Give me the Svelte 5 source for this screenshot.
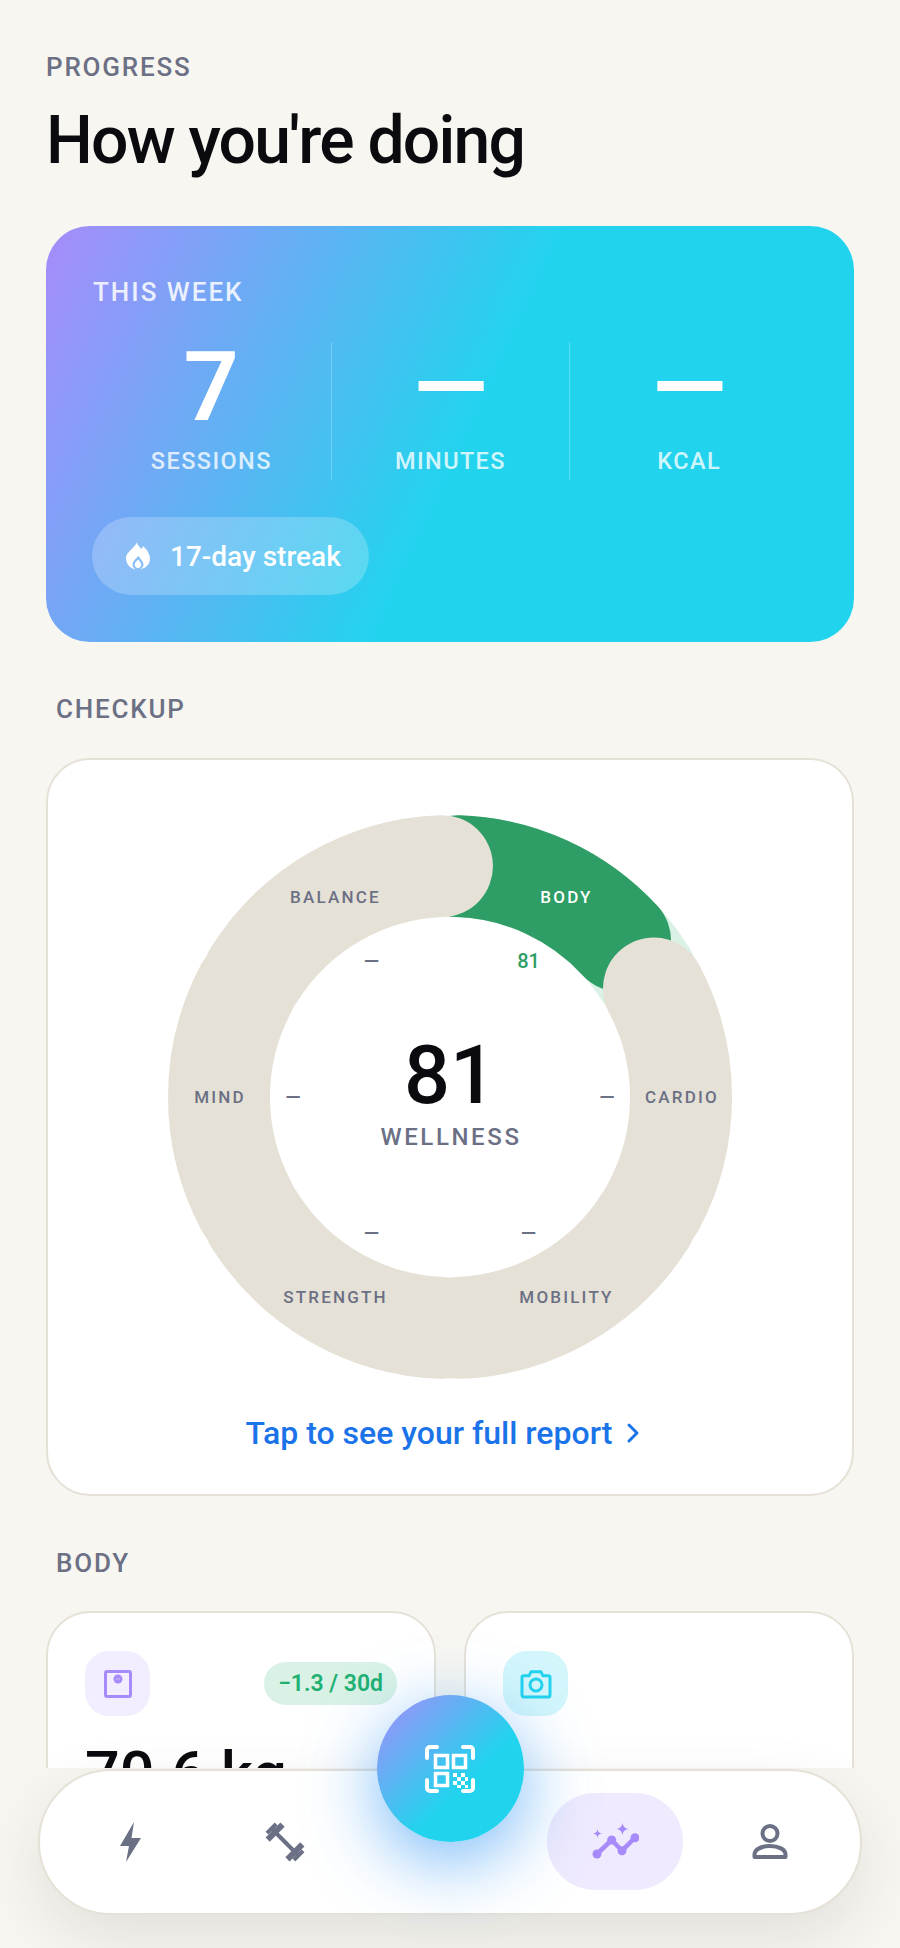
<script>
  const R = 231, C = 282;
  const pt = (a, r = R) => {
    const t = (a * Math.PI) / 180;
    return [C + r * Math.sin(t), C - r * Math.cos(t)];
  };
  const arc = (a, b) => {
    const [x1, y1] = pt(a), [x2, y2] = pt(b);
    return `M${x1.toFixed(2)} ${y1.toFixed(2)}A${R} ${R} 0 0 1 ${x2.toFixed(2)} ${y2.toFixed(2)}`;
  };
  const segs = [
    { name: 'BODY', mid: 30, value: '81', score: 81 },
    { name: 'CARDIO', mid: 90, value: '—' },
    { name: 'MOBILITY', mid: 150, value: '—' },
    { name: 'STRENGTH', mid: 210, value: '—' },
    { name: 'MIND', mid: 270, value: '—' },
    { name: 'BALANCE', mid: 330, value: '—' }
  ];
  const stats = [
    { v: '7', l: 'SESSIONS' },
    { v: '—', l: 'MINUTES' },
    { v: '—', l: 'KCAL' }
  ];
</script>

<div class="app">
  <main class="scroll">
    <p class="eyebrow">PROGRESS</p>
    <h1>How you're doing</h1>

    <section class="hero">
      <p class="hero-label">THIS WEEK</p>
      <div class="stats">
        {#each stats as s}
          <div class="stat">
            <span class="stat-v">{s.v}</span>
            <span class="stat-l">{s.l}</span>
          </div>
        {/each}
      </div>
      <div class="pill">
        <svg class="flame" viewBox="0 0 26 28" width="26" height="28">
          <path fill="#fff" fill-rule="evenodd" d="M12 0.5c1 3.5 3 5 4.500 6.500 .8-1 1.200-2 1.400-3 3.600 3 7.100 7.600 7.100 12.600C25 23 19.600 27.500 13 27.500S1 23 1 16c0-6 7.500-9 11-15.500zM13.200 14c-2.600 2.800-5.700 5.800-5.700 8.400 0 2.900 2.400 5 5.500 5s5.500-2.100 5.500-5c0-2.700-3-5.600-5.300-8.400z"/>
          <path fill="#fff" d="M13.100 17.500c-1.800 2-3.400 3.600-3.400 5.300 0 1.800 1.500 3.200 3.300 3.200s3.300-1.400 3.300-3.200c0-1.700-1.700-3.400-3.200-5.300z"/>
        </svg>
        <span>17-day streak</span>
      </div>
    </section>

    <h2>CHECKUP</h2>
    <section class="card checkup">
      <svg class="ring" viewBox="0 0 564 564" width="564" height="564">
        <g fill="none" stroke-width="102" stroke-linecap="round">
          <path d={arc(2, 58)} stroke="#d9f2e5" />
          <path d={arc(2, 47.4)} stroke="#2f9e66" />
          {#each segs.slice(1) as s}
            <path d={arc(s.mid - 28, s.mid + 28)} stroke="#e5e1d6" />
          {/each}
        </g>
        {#each segs as s}
          <text class="seg-name" class:on={s.score} x={pt(s.mid)[0] + 1} y={pt(s.mid)[1]}>{s.name}</text>
          <text class="seg-val" class:on={s.score} x={pt(s.mid, 157)[0]} y={pt(s.mid, 157)[1]}>{s.value}</text>
        {/each}
        <text class="total" x="282" y="260">81</text>
        <text class="total-l" x="283" y="322">WELLNESS</text>
      </svg>
      <div class="report">
        <span>Tap to see your full report</span>
        <svg viewBox="0 0 14 22" width="14" height="22"><path d="M3 3l8 8-8 8" fill="none" stroke="#1a73e8" stroke-width="3" stroke-linecap="round" stroke-linejoin="round"/></svg>
      </div>
    </section>

    <h2>BODY</h2>
    <div class="cols">
      <section class="card mini">
        <div class="mini-top">
          <div class="tile purple">
            <svg viewBox="0 0 28 28" width="28" height="28">
              <rect x="1.500" y="1.500" width="25" height="25" rx="1.500" fill="none" stroke="#a78bfa" stroke-width="3"/>
              <circle cx="14" cy="9" r="4.500" fill="#a78bfa"/>
              <path d="M12 9h.6M13.700 9h.6M15.400 9h.6" stroke="#fff" stroke-width="1.200"/>
            </svg>
          </div>
          <span class="badge">−1.3 / 30d</span>
        </div>
        <div class="mini-val">70.6 kg</div>
      </section>
      <section class="card mini">
        <div class="mini-top">
          <div class="tile cyan">
            <svg viewBox="0 0 32 30" width="32" height="30">
              <path d="M2 8.500c0-1 .7-1.700 1.700-1.700H9l2-4h10l2 4h5.300c1 0 1.700.7 1.700 1.700v17.800c0 1-.7 1.700-1.700 1.700H3.700c-1 0-1.700-.7-1.700-1.700z" fill="none" stroke="#22d3ee" stroke-width="3" stroke-linejoin="round"/>
              <circle cx="16" cy="16" r="6" fill="none" stroke="#22d3ee" stroke-width="3"/>
            </svg>
          </div>
        </div>
      </section>
    </div>
  </main>

  <nav class="nav">
    <div class="item">
      <svg viewBox="0 0 24 42" width="24" height="42"><path d="M16 1L2 25h9L8 41 23 17h-9.500z" fill="#6b7085"/></svg>
    </div>
    <div class="item">
      <svg viewBox="0 0 44 44" width="44" height="44">
        <g transform="rotate(45 22 22)" fill="#6b7085">
          <rect x="4" y="20" width="36" height="4"/>
          <rect x="1" y="15.500" width="4" height="13"/>
          <rect x="5" y="11.500" width="6" height="21"/>
          <rect x="33" y="11.500" width="6" height="21"/>
          <rect x="39" y="15.500" width="4" height="13"/>
        </g>
      </svg>
    </div>
    <div class="slot"></div>
    <div class="item active">
      <svg viewBox="0 -3 48 44" width="48" height="44">
        <path d="M6 31L20.700 17 31 27.700 44 14.700" fill="none" stroke="#a78bfa" stroke-width="4.500" stroke-linejoin="round"/>
        <circle cx="6" cy="31" r="4.500" fill="#a78bfa"/>
        <circle cx="20.700" cy="17" r="4.500" fill="#a78bfa"/>
        <circle cx="31" cy="27.700" r="4.500" fill="#a78bfa"/>
        <circle cx="44" cy="14.700" r="4.500" fill="#a78bfa"/>
        <path d="M31.500 0c.8 3.800 2.200 5.200 6 6-3.800.8-5.200 2.200-6 6-.8-3.800-2.200-5.200-6-6 3.800-.8 5.200-2.200 6-6z" fill="#a78bfa"/>
        <path d="M6.500 6c.3 2.900 1.600 4.200 4.500 4.500-2.900.3-4.200 1.600-4.500 4.500-.3-2.900-1.600-4.200-4.500-4.500 2.900-.3 4.200-1.600 4.500-4.500z" fill="#a78bfa"/>
      </svg>
    </div>
    <div class="item">
      <svg viewBox="0 0 36 36" width="36" height="36">
        <circle cx="18" cy="9.500" r="7.500" fill="none" stroke="#6b7085" stroke-width="4"/>
        <path d="M2.500 33v-2.500c0-5 7-8.500 15.500-8.500s15.500 3.500 15.500 8.500V33z" fill="none" stroke="#6b7085" stroke-width="4" stroke-linejoin="round"/>
      </svg>
    </div>
  </nav>

  <button class="fab" aria-label="Scan">
    <svg viewBox="0 0 50 48" width="50" height="48" fill="none" stroke="#fff">
      <g stroke-width="4" stroke-linecap="round" stroke-linejoin="round">
        <path d="M2 13V5c0-1.700 1.300-3 3-3h7"/>
        <path d="M38 2h7c1.700 0 3 1.300 3 3v8"/>
        <path d="M2 35v8c0 1.700 1.300 3 3 3h7"/>
        <path d="M38 46h7c1.700 0 3-1.300 3-3v-8"/>
      </g>
      <g stroke-width="3.500">
        <rect x="10.500" y="10.500" width="12" height="12"/>
        <rect x="28.500" y="10.500" width="12" height="12"/>
        <rect x="10.500" y="28.500" width="12" height="12"/>
      </g>
      <path d="M28 28h4v4h-4zM36 28h4v4h-4zM32 32h4v4h-4zM40 32h3v4h-3zM28 36h4v4h-4zM36 36h4v4h-4zM32 40h4v3h-4zM40 40h3v3h-3z" fill="#fff" stroke="none"/>
    </svg>
  </button>
</div>

<style>
  :global(body) {
    margin: 0;
    background: #f7f6f1;
  }
  .app {
    position: relative;
    height: 1948px;
    overflow: hidden;
    background: #f7f6f1;
    font-family: Roboto, "Liberation Sans", sans-serif;
    color: #0b0b0f;
  }
  .scroll {
    box-sizing: border-box;
    height: 1768px;
    padding: 52px 46px 0;
    overflow: hidden;
  }
  .eyebrow {
    margin: 0;
    font-size: 26px;
    line-height: 30px;
    font-weight: 500;
    letter-spacing: 1.800px;
    color: #6b7085;
  }
  h1 {
    margin: 23px 0 0;
    font-size: 66px;
    line-height: 72px;
    font-weight: 500;
    letter-spacing: -1.800px;
  }
  .hero {
    box-sizing: border-box;
    height: 416px;
    margin-top: 49px;
    padding: 51px 46px 0;
    border-radius: 44px;
    background: linear-gradient(115deg, #a78bfa 0%, #22d3ee 52%);
    color: #fff;
  }
  .hero-label {
    margin: 0;
    padding-left: 1px;
    font-size: 26px;
    line-height: 30px;
    font-weight: 500;
    letter-spacing: 2px;
    color: rgba(255, 255, 255, 0.85);
  }
  .stats {
    display: grid;
    grid-template-columns: repeat(3, 1fr);
    margin-top: 35px;
    height: 138px;
  }
  .stat {
    display: flex;
    flex-direction: column;
    align-items: center;
    border-left: 1.500px solid rgba(255, 255, 255, 0.25);
  }
  .stat:first-child {
    border-left: 0;
  }
  .stat-v {
    font-size: 97px;
    line-height: 90px;
    font-weight: 600;
  }
  .stat-l {
    margin-top: 14px;
    font-size: 23.500px;
    line-height: 30px;
    font-weight: 500;
    letter-spacing: 1.400px;
    color: rgba(255, 255, 255, 0.8);
  }
  .pill {
    display: inline-flex;
    align-items: center;
    gap: 19px;
    height: 78px;
    margin-top: 37px;
    padding: 0 28px 0 33px;
    border-radius: 39px;
    background: rgba(255, 255, 255, 0.22);
    font-size: 28px;
    font-weight: 500;
  }
  h2 {
    margin: 52px 10px 0;
    font-size: 26px;
    line-height: 30px;
    font-weight: 500;
    letter-spacing: 1.800px;
    color: #6b7085;
  }
  .card {
    box-sizing: border-box;
    background: #fff;
    border: 2.500px solid #e5e1d6;
    border-radius: 44px;
  }
  .checkup {
    height: 738px;
    margin-top: 34px;
    padding-top: 54.500px;
    display: flex;
    flex-direction: column;
    align-items: center;
  }
  .ring {
    display: block;
    flex: none;
  }
  .ring text {
    font-family: Roboto, "Liberation Sans", sans-serif;
    text-anchor: middle;
    dominant-baseline: central;
  }
  .seg-name {
    font-size: 17px;
    font-weight: 500;
    letter-spacing: 2.200px;
    fill: #6b7085;
  }
  .seg-name.on {
    fill: #fff;
  }
  .seg-val {
    font-size: 20px;
    font-weight: 500;
    fill: #6b7085;
  }
  .seg-val.on {
    fill: #2f9e66;
  }
  .total {
    font-size: 81px;
    font-weight: 500;
    fill: #0b0b0f;
  }
  .total-l {
    font-size: 24px;
    font-weight: 500;
    letter-spacing: 2.600px;
    fill: #6b7085;
  }
  .report {
    display: flex;
    align-items: center;
    gap: 14px;
    margin-top: 34px;
    padding-right: 14px;
    font-size: 32px;
    line-height: 40px;
    font-weight: 500;
    color: #1a73e8;
  }
  .cols {
    display: grid;
    grid-template-columns: 1fr 1fr;
    gap: 28px;
    margin-top: 33px;
  }
  .mini {
    height: 300px;
    padding: 38px 37px 0;
  }
  .mini-top {
    display: flex;
    align-items: center;
    justify-content: space-between;
  }
  .tile {
    display: grid;
    place-items: center;
    width: 65px;
    height: 65px;
    border-radius: 24px;
  }
  .purple {
    background: #f3eeff;
  }
  .cyan {
    background: #d3f6fb;
  }
  .badge {
    display: flex;
    align-items: center;
    height: 43px;
    padding: 0 14px;
    border-radius: 22px;
    background: #d9f2e5;
    color: #1fb072;
    font-size: 23px;
    font-weight: 600;
  }
  .mini-val {
    margin-top: 23px;
    font-size: 61px;
    line-height: 70px;
    font-weight: 500;
  }
  .nav {
    box-sizing: border-box;
    position: absolute;
    left: 38px;
    top: 1769px;
    width: 824px;
    height: 146px;
    display: flex;
    align-items: center;
    justify-content: center;
    gap: 19px;
    background: #fff;
    border: 2px solid #e5e1d6;
    border-radius: 73px;
    box-shadow: 0 24px 64px rgba(40, 40, 30, 0.1);
  }
  .item {
    display: grid;
    place-items: center;
    width: 136px;
    height: 97px;
    border-radius: 48px;
  }
  .item.active {
    margin-bottom: 1px;
    background: #efeafd;
  }
  .slot {
    width: 156px;
  }
  .fab {
    position: absolute;
    left: 376.500px;
    top: 1695px;
    display: grid;
    place-items: center;
    width: 147px;
    height: 147px;
    padding: 0;
    border: 0;
    border-radius: 50%;
    background: linear-gradient(135deg, #a78bfa 0%, #22d3ee 60%);
    box-shadow: 0 20px 70px rgba(50, 150, 245, 0.65);
  }
</style>
